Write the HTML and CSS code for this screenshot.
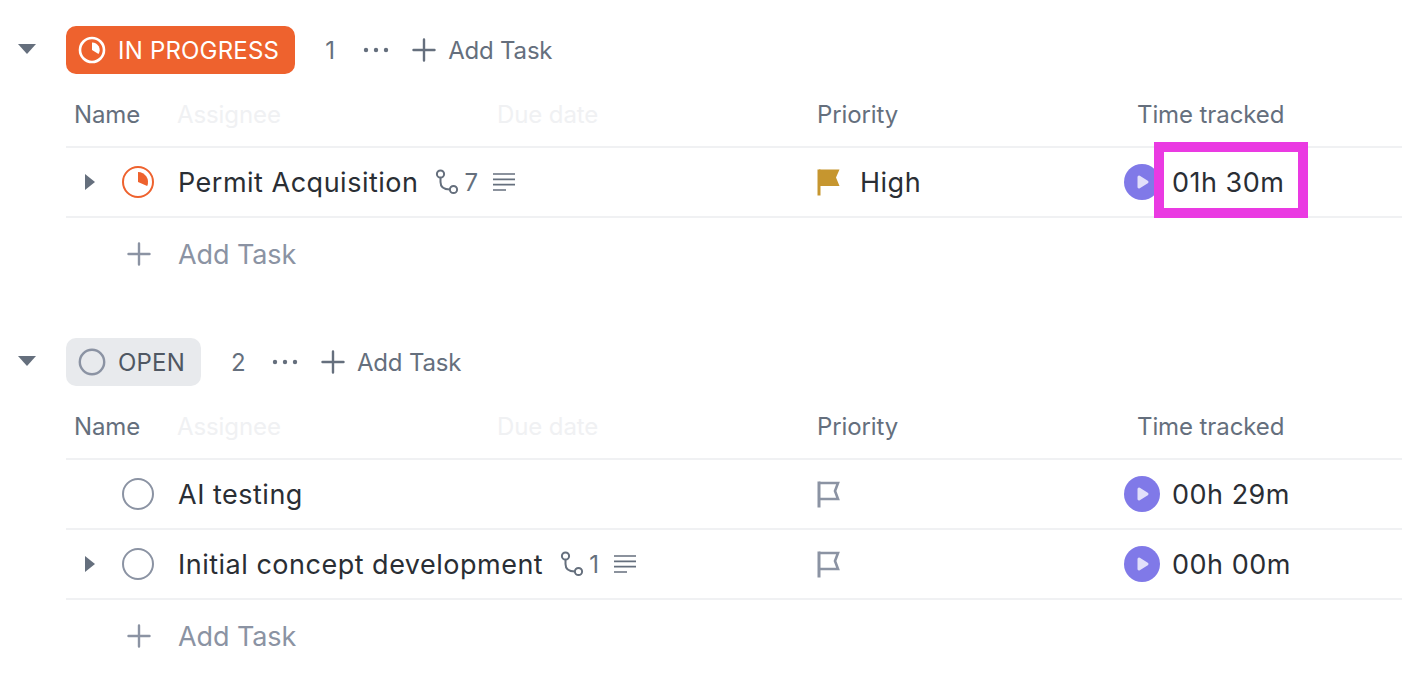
FILE: index.html
```html
<!DOCTYPE html>
<html lang="en">
<head>
    <meta charset="UTF-8">
    <meta name="viewport" content="width=device-width, initial-scale=1.0">
    <title>Task list</title>
    <link rel="stylesheet" href="styles.css">
</head>
<body>
    <svg class="icon-defs" width="0" height="0" aria-hidden="true">
        <symbol id="plus" viewBox="0 0 24 24"><path d="M12 1.500v21M1.500 12h21" fill="none" stroke="currentColor" stroke-width="2.400" stroke-linecap="round"/></symbol>
        <symbol id="dots" viewBox="0 0 26 6"><circle cx="3" cy="3" r="2.200" fill="currentColor"/><circle cx="13" cy="3" r="2.200" fill="currentColor"/><circle cx="23" cy="3" r="2.200" fill="currentColor"/></symbol>
        <symbol id="subtask" viewBox="0 0 24 26"><g fill="none" stroke="currentColor" stroke-width="2"><circle cx="5.500" cy="5" r="3.600"/><circle cx="18.500" cy="20.500" r="3.600"/><path d="M5.500 8.600v4.400c0 4.800 3 7.500 9.400 7.500"/></g></symbol>
        <symbol id="lines" viewBox="0 0 22 18"><path d="M0 1h22M0 6.300h22M0 11.600h22M0 17h13" fill="none" stroke="currentColor" stroke-width="1.700"/></symbol>
        <symbol id="flag" viewBox="0 0 24 28"><path d="M2 1.500v26" fill="none" stroke="currentColor" stroke-width="3"/><path d="M2 3h19l-3 8 3 8H2" fill="none" stroke="currentColor" stroke-width="2.600"/></symbol>
        <symbol id="flag-solid" viewBox="0 0 24 28"><path d="M2 1.500v26" fill="none" stroke="currentColor" stroke-width="3"/><path d="M2 1.500h20.500l-3.500 8 3.500 8.500H2z" fill="currentColor"/></symbol>
        <symbol id="play" viewBox="0 0 36 36"><circle cx="18" cy="18" r="18" fill="#8079e8"/><path d="M15 13l8 5-8 5z" fill="#e2e0fa" stroke="#e2e0fa" stroke-width="3" stroke-linejoin="round"/></symbol>
    </svg>

    <section class="group">
        <div class="group-head">
            <span class="caret-down"></span>
            <span class="status status-progress">
                <svg class="status-icon" viewBox="0 0 28 28"><circle cx="14" cy="14" r="12" fill="none" stroke="#fff" stroke-width="2.600"/><path d="M14 6.500A7.500 7.500 0 0 1 20.500 18L14 14z" fill="#fff"/></svg>
                IN PROGRESS
            </span>
            <span class="count">1</span>
            <svg class="dots"><use href="#dots"/></svg>
            <span class="head-add"><svg class="head-plus"><use href="#plus"/></svg>Add Task</span>
        </div>
        <div class="col-row">
            <span class="col-name">Name</span>
            <span class="col col-faint">Assignee</span>
            <span class="col col-faint">Due date</span>
            <span class="col">Priority</span>
            <span class="col-last">Time tracked</span>
        </div>
        <div class="task-row">
            <div class="task-name">
                <span class="caret-right"></span>
                <svg class="task-status" viewBox="0 0 36 36"><circle cx="18" cy="18" r="15" fill="none" stroke="#ee622e" stroke-width="2"/><path d="M18 8A10 10 0 0 1 27.200 22L18 18z" fill="#ee622e"/></svg>
                <span class="task-title">Permit Acquisition</span>
                <span class="task-meta"><svg class="subtask"><use href="#subtask"/></svg>7<svg class="lines"><use href="#lines"/></svg></span>
            </div>
            <div class="cell cell-priority"><svg class="flag flag-high"><use href="#flag-solid"/></svg><span>High</span></div>
            <div class="cell cell-time"><svg class="play"><use href="#play"/></svg><span>01h 30m</span><span class="highlight"></span></div>
        </div>
        <div class="add-row"><svg class="add-plus"><use href="#plus"/></svg>Add Task</div>
    </section>

    <section class="group">
        <div class="group-head">
            <span class="caret-down"></span>
            <span class="status status-open">
                <svg class="status-icon" viewBox="0 0 28 28"><circle cx="14" cy="14" r="12.200" fill="none" stroke="#8b93a3" stroke-width="2.400"/></svg>
                OPEN
            </span>
            <span class="count count-open">2</span>
            <svg class="dots"><use href="#dots"/></svg>
            <span class="head-add"><svg class="head-plus"><use href="#plus"/></svg>Add Task</span>
        </div>
        <div class="col-row">
            <span class="col-name">Name</span>
            <span class="col col-faint">Assignee</span>
            <span class="col col-faint">Due date</span>
            <span class="col">Priority</span>
            <span class="col-last">Time tracked</span>
        </div>
        <div class="task-row">
            <div class="task-name">
                <span class="caret-none"></span>
                <svg class="task-status" viewBox="0 0 36 36"><circle cx="18" cy="18" r="15" fill="none" stroke="#8b93a3" stroke-width="2"/></svg>
                <span class="task-title">AI testing</span>
            </div>
            <div class="cell cell-priority"><svg class="flag"><use href="#flag"/></svg></div>
            <div class="cell cell-time"><svg class="play"><use href="#play"/></svg><span>00h 29m</span></div>
        </div>
        <div class="task-row">
            <div class="task-name">
                <span class="caret-right"></span>
                <svg class="task-status" viewBox="0 0 36 36"><circle cx="18" cy="18" r="15" fill="none" stroke="#8b93a3" stroke-width="2"/></svg>
                <span class="task-title">Initial concept development</span>
                <span class="task-meta"><svg class="subtask"><use href="#subtask"/></svg>1<svg class="lines"><use href="#lines"/></svg></span>
            </div>
            <div class="cell cell-priority"><svg class="flag"><use href="#flag"/></svg></div>
            <div class="cell cell-time"><svg class="play"><use href="#play"/></svg><span>00h 00m</span></div>
        </div>
        <div class="add-row"><svg class="add-plus"><use href="#plus"/></svg>Add Task</div>
    </section>
</body>
</html>
```

FILE: styles.css
```css
* {
    box-sizing: border-box;
    margin: 0;
    padding: 0;
}

body {
    background-color: #fff;
    font-family: Inter, "Liberation Sans", sans-serif;
    color: #2a2e34;
    overflow: hidden;
}

.icon-defs {
    position: absolute;
}

.group {
    padding: 26px 0 22px 18px;
}

.group-head {
    display: flex;
    align-items: center;
    height: 48px;
    color: #656f7d;
    font-size: 24px;
}

.caret-down {
    width: 0;
    height: 0;
    border-left: 9px solid transparent;
    border-right: 9px solid transparent;
    border-top: 10px solid #656f7d;
    margin-right: 30px;
    margin-top: -2px;
}

.status {
    display: flex;
    align-items: center;
    height: 48px;
    padding: 0 16px 0 12px;
    border-radius: 10px;
    font-size: 24px;
    letter-spacing: 0.2px;
    gap: 12px;
}

.status-progress {
    background-color: #ee622e;
    color: #fff;
}

.status-open {
    background-color: #e8eaed;
    color: #4f5762;
}

.status-icon {
    width: 28px;
    height: 28px;
}

.count {
    margin-left: 30px;
    width: 13px;
}

.count-open {
    width: 16px;
}

.dots {
    width: 26px;
    height: 6px;
    margin-left: 25px;
}

.head-add {
    display: flex;
    align-items: center;
    margin-left: 23px;
    letter-spacing: -0.2px;
}

.head-plus {
    width: 24px;
    height: 24px;
    margin-right: 12px;
}

.col-row {
    display: flex;
    align-items: center;
    height: 74px;
    padding-top: 8px;
    padding-left: 8px;
    margin-left: 48px;
    border-bottom: 2px solid #f0f1f3;
    color: #656f7d;
    font-size: 24px;
    letter-spacing: -0.1px;
}

.col-name {
    flex: 0 0 103px;
}

.col {
    flex: 0 0 320px;
}

.col-last {
    flex: none;
}

.col-faint {
    color: #f0f1f3;
}

.task-row {
    display: flex;
    align-items: center;
    height: 70px;
    margin-left: 48px;
    border-bottom: 2px solid #f0f1f3;
    font-size: 27px;
    letter-spacing: 0.5px;
}

.task-name {
    display: flex;
    align-items: center;
    width: 751px;
    padding-left: 19px;
}

.caret-right {
    width: 0;
    height: 0;
    border-top: 8px solid transparent;
    border-bottom: 8px solid transparent;
    border-left: 10px solid #656f7d;
    margin-right: 25px;
}

.caret-none {
    width: 10px;
    margin-right: 25px;
}

.task-status {
    width: 36px;
    height: 36px;
    margin-right: 22px;
}

.task-meta {
    display: flex;
    align-items: center;
    color: #656f7d;
    font-size: 24px;
    letter-spacing: 0;
    margin-left: 17px;
}

.subtask {
    width: 24px;
    height: 26px;
    margin-right: 5px;
}

.lines {
    width: 22px;
    height: 18px;
    margin-left: 15px;
}

.cell {
    display: flex;
    align-items: center;
}

.cell-priority {
    width: 307px;
}

.flag {
    width: 24px;
    height: 28px;
    color: #8b93a3;
}

.flag-high {
    color: #c6962f;
    margin-right: 19px;
}

.cell-time {
    position: relative;
    gap: 12px;
}

.play {
    width: 36px;
    height: 36px;
}

.highlight {
    position: absolute;
    left: 30px;
    top: -22px;
    width: 154px;
    height: 76px;
    border: 10px solid #ea3ae2;
}

.add-row {
    display: flex;
    align-items: center;
    height: 72px;
    margin-left: 48px;
    padding-left: 61px;
    color: #8b93a3;
    font-size: 27px;
    letter-spacing: -0.1px;
}

.add-plus {
    width: 24px;
    height: 24px;
    margin-right: 27px;
}
```
